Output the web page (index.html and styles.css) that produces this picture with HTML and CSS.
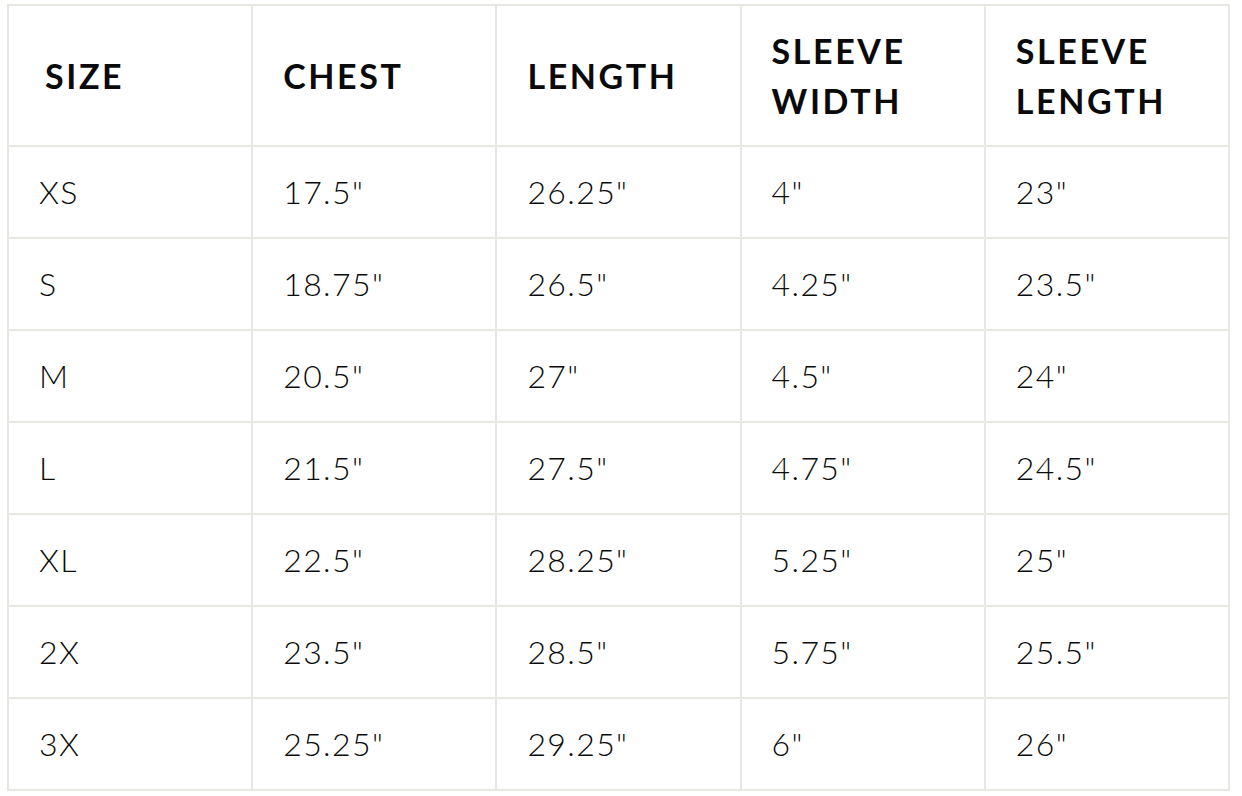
FILE: index.html
```html
<!DOCTYPE html>
<html lang="en">
<head>
<meta charset="utf-8">
<title>Size Chart</title>
<link rel="stylesheet" href="styles.css">
</head>
<body>
<div class="wrap">
<table class="chart">
  <thead>
    <tr class="head-row">
      <th class="first">SIZE</th>
      <th>CHEST</th>
      <th>LENGTH</th>
      <th>SLEEVE<br>WIDTH</th>
      <th>SLEEVE<br>LENGTH</th>
    </tr>
  </thead>
  <tbody>
    <tr><td>XS</td><td>17.5"</td><td>26.25"</td><td>4"</td><td>23"</td></tr>
    <tr><td>S</td><td>18.75"</td><td>26.5"</td><td>4.25"</td><td>23.5"</td></tr>
    <tr><td>M</td><td>20.5"</td><td>27"</td><td>4.5"</td><td>24"</td></tr>
    <tr><td>L</td><td>21.5"</td><td>27.5"</td><td>4.75"</td><td>24.5"</td></tr>
    <tr><td>XL</td><td>22.5"</td><td>28.25"</td><td>5.25"</td><td>25"</td></tr>
    <tr><td>2X</td><td>23.5"</td><td>28.5"</td><td>5.75"</td><td>25.5"</td></tr>
    <tr><td>3X</td><td>25.25"</td><td>29.25"</td><td>6"</td><td>26"</td></tr>
  </tbody>
</table>
</div>
</body>
</html>
```
FILE: styles.css
```css
html, body {
  margin: 0;
  padding: 0;
  background: #ffffff;
}
.wrap {
  padding: 4px 0 0 7px;
}
.chart {
  width: 1223px;
  table-layout: fixed;
  border-collapse: separate;
  border-spacing: 0;
  border-top: 2px solid #e8e7e1;
  border-left: 2px solid #e8e7e1;
  font-family: Lato, "Liberation Sans", sans-serif;
  color: #0a0a0a;
}
.chart th,
.chart td {
  border-right: 2px solid #e8e7e1;
  border-bottom: 2px solid #e8e7e1;
  text-align: left;
  vertical-align: middle;
  padding: 0 0 0 30px;
}
.chart th {
  font-weight: 700;
  font-size: 34px;
  line-height: 50px;
  letter-spacing: 2.6px;
}
.chart th.first {
  padding-left: 36px;
}
.head-row {
  height: 141px;
}
.chart tbody tr {
  height: 92px;
}
.chart td {
  font-weight: 300;
  font-size: 32px;
  line-height: 40px;
  letter-spacing: 1.4px;
}
```
